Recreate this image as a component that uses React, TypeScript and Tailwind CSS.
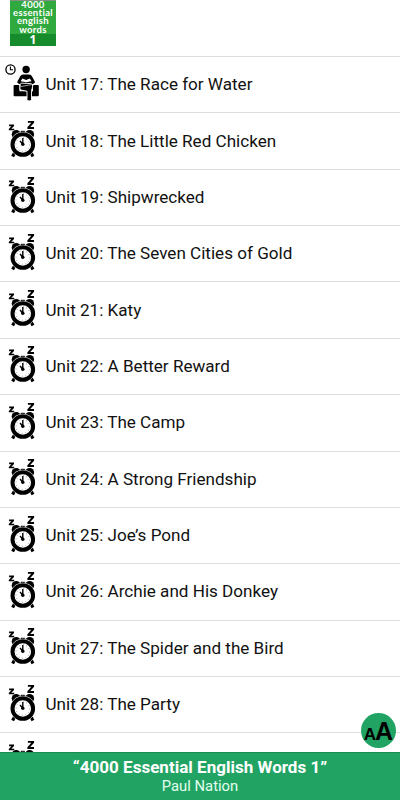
const UNITS = [
  { id: 17, title: 'The Race for Water', status: 'reading' },
  { id: 18, title: 'The Little Red Chicken', status: 'asleep' },
  { id: 19, title: 'Shipwrecked', status: 'asleep' },
  { id: 20, title: 'The Seven Cities of Gold', status: 'asleep' },
  { id: 21, title: 'Katy', status: 'asleep' },
  { id: 22, title: 'A Better Reward', status: 'asleep' },
  { id: 23, title: 'The Camp', status: 'asleep' },
  { id: 24, title: 'A Strong Friendship', status: 'asleep' },
  { id: 25, title: 'Joe’s Pond', status: 'asleep' },
  { id: 26, title: 'Archie and His Donkey', status: 'asleep' },
  { id: 27, title: 'The Spider and the Bird', status: 'asleep' },
  { id: 28, title: 'The Party', status: 'asleep' },
] as const;

const COVER_LINES = ['4000', 'essential', 'english', 'words'];

// Alarm clock with two Zs above it
function SleepingClock() {
  return (
    <svg viewBox="0 0 46 56" className="h-14 w-[46px] shrink-0" aria-hidden="true">
      <path d="M9.1 11.6H14V13L11.3 15.7H14.2V17.3H8.8V15.9L11.4 13.2H9.1Z" />
      <path d="M27.9 8H34.1V9.7L30.2 14.1H34V15.9H27.4V14.2L31.3 9.8H27.9Z" />
      <circle cx="16.2" cy="21.4" r="4.5" />
      <circle cx="29.6" cy="21.4" r="4.5" />
      <path d="M20.8 17.8h4v3h-4z" />
      <path d="M14.8 39.5l-2.2 4M30.8 39.5l2.2 4" stroke="#000" strokeWidth="3.2" />
      <circle cx="22.8" cy="31.5" r="12.7" fill="#fff" />
      <circle cx="22.8" cy="31.5" r="10.3" fill="#fff" stroke="#000" strokeWidth="4" />
      <circle
        cx="22.8"
        cy="31.5"
        r="6.8"
        fill="none"
        stroke="#888"
        strokeWidth="1"
        strokeDasharray="0.8 2.76"
      />
      <path d="M22.8 25V31.5M20 28L22.8 31.2" stroke="#000" strokeWidth="1.4" />
      <circle cx="22.8" cy="31.2" r="1.7" />
    </svg>
  );
}

// Person sitting in an armchair with an open book, small clock beside
function ReadingPerson() {
  return (
    <svg viewBox="0 0 46 56" className="h-14 w-[46px] shrink-0" aria-hidden="true">
      <circle cx="10.5" cy="12.5" r="4.6" fill="#fff" stroke="#000" strokeWidth="1.3" />
      <path d="M10.4 9.6V12.7H13" fill="none" stroke="#000" strokeWidth="1.1" />
      <circle cx="26.1" cy="12.5" r="3.7" />
      <path d="M23 17.4H29.2Q31 17.4 31.8 19L34.8 24.4Q35.4 26 33.8 26.5L31.5 27.4H20.7L18.4 26.5Q16.8 26 17.4 24.4L20.4 19Q21.2 17.4 23 17.4Z" />
      <path d="M20.6 24.2L22.4 21.6L26.1 22.9L29.8 21.6L31.6 24.2L26.1 25.2Z" fill="#fff" />
      <path d="M14.6 27.9H18.4Q19.4 27.9 19.4 28.9V34.2H33V28.9Q33 27.9 34 27.9H37.8Q38.8 27.9 38.8 28.9V38.3Q38.8 39.3 37.8 39.3H14.6Q13.6 39.3 13.6 38.3V28.9Q13.6 27.9 14.6 27.9Z" />
      <path
        d="M21.4 26.2L31 26.6Q33 27 32.6 29.5L31.5 34V42.6Q31.5 43.9 29.3 43.9Q27 43.9 27 42.6V34.2L21.6 33.2Q19.4 32.6 19.9 31L20.3 27.6Q20.5 26.2 21.4 26.2Z"
        stroke="#fff"
        strokeWidth=".9"
      />
      <path d="M20.8 29.6L31.6 27.6" stroke="#fff" strokeWidth=".6" />
    </svg>
  );
}

function BookCover() {
  return (
    <div className="ml-2.5 flex h-[46px] w-[46px] flex-col items-center border-t border-[#829084] bg-[#30aa3e] text-center font-['Lato',sans-serif] text-white">
      <div className="flex h-[33px] shrink-0 flex-col items-center">
        {COVER_LINES.map((line) => (
          <span key={line} className="h-[8.2px] text-[9.5px] leading-[8px] font-bold tracking-[0.35px]">
            {line}
          </span>
        ))}
      </div>
      <div className="h-3 w-full shrink-0 bg-[#168b2c] font-['Open_Sans',sans-serif] text-[12px] leading-[11px] font-bold">
        1
      </div>
    </div>
  );
}

export default function App() {
  return (
    <div className="relative flex h-[800px] w-[400px] flex-col overflow-hidden bg-white font-['Roboto',sans-serif] text-[#111]">
      <main className="min-h-0 flex-1 overflow-hidden">
        <div className="h-14">
          <BookCover />
        </div>
        <ul>
          {UNITS.map((unit) => (
            <li key={unit.id} className="flex h-[56.36px] items-center border-t border-[#dedede]">
              {unit.status === 'reading' ? <ReadingPerson /> : <SleepingClock />}
              <span className="-ml-[0.5px] pb-px text-[17.08px] leading-6 whitespace-nowrap">
                Unit {unit.id}: {unit.title}
              </span>
            </li>
          ))}
          <li className="flex h-[56.36px] items-center border-t border-[#dedede]">
            <SleepingClock />
          </li>
        </ul>
      </main>

      <footer className="flex h-12 shrink-0 flex-col items-center border-t border-[#168c50] bg-[#21a463] pt-1 text-white">
        <h1 className="text-[17px] leading-[21px] font-bold tracking-[0.02px]">“4000 Essential English Words 1”</h1>
        <p className="text-[14.8px] leading-[17px] text-[#e2fff0]">Paul Nation</p>
      </footer>

      <button
        aria-label="Text size"
        className="absolute top-[713px] left-[361px] flex h-[35px] w-[35px] items-baseline justify-center rounded-full bg-[#21a463] font-['Liberation_Sans',sans-serif] leading-[37px] text-black"
      >
        <span className="text-[17px] font-bold">A</span>
        <span className="-ml-px text-[25px] font-bold">A</span>
      </button>
    </div>
  );
}
